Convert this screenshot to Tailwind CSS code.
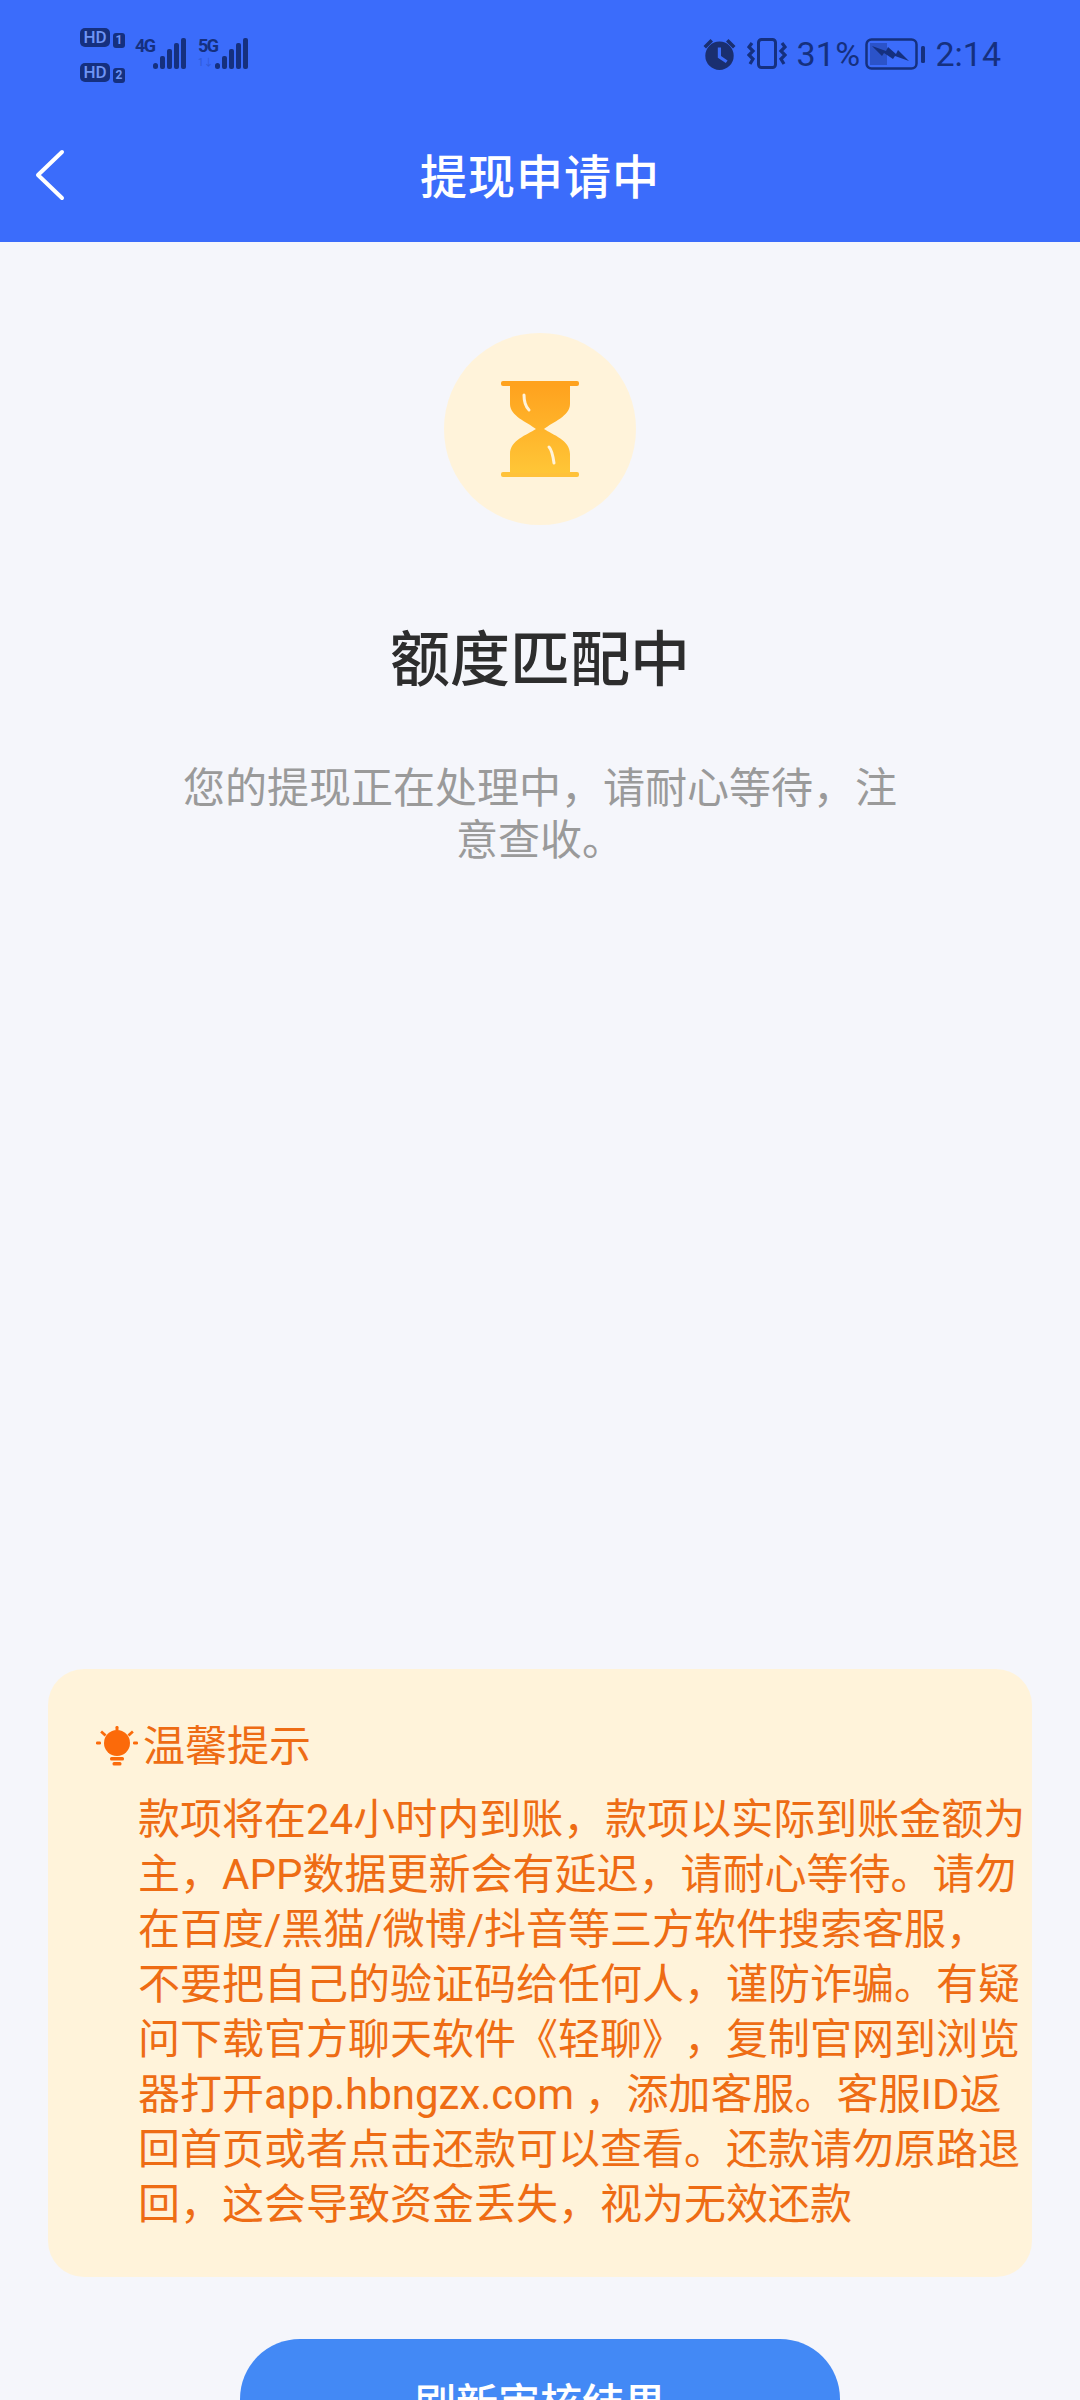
<!DOCTYPE html>
<html>
<head>
  <title>提现申请中</title>
  <script src="https://cdn.jsdelivr.net/npm/@tailwindcss/browser@4"></script>
  <meta name="viewport" content="width=device-width, initial-scale=1.0">
</head>

<body class="bg-[#f5f6fb] font-['Roboto','Noto_Sans_CJK_SC',sans-serif] [text-spacing-trim:space-all]">
  <div class="w-[1080px] h-[2400px] overflow-hidden flex flex-col">

    <!-- Header -->
    <div class="h-[242px] shrink-0 bg-[#3b6cfb] flex flex-col">
      <!-- Status bar -->
      <div class="h-[110px] flex justify-between pl-[80px] pr-[79px] text-[#15307f]">
        <div class="flex pt-[28px]">
          <div class="flex flex-col gap-[15px]">
            <div class="flex gap-[3px]">
              <span class="w-[30px] h-[19px] rounded-[5px] bg-[#15307f] text-[#6f95f5] text-[17px] leading-[19px] font-medium text-center">HD</span>
              <span class="w-[12px] h-[15px] mt-[5px] rounded-[3px] bg-[#15307f] text-[#6f95f5] text-[12px] leading-[15px] font-bold text-center">1</span>
            </div>
            <div class="flex gap-[3px]">
              <span class="w-[30px] h-[19px] rounded-[5px] bg-[#15307f] text-[#6f95f5] text-[17px] leading-[19px] font-medium text-center">HD</span>
              <span class="w-[12px] h-[15px] mt-[5px] rounded-[3px] bg-[#15307f] text-[#6f95f5] text-[12px] leading-[15px] font-bold text-center">2</span>
            </div>
          </div>
          <span class="ml-[10px] mt-[9px] w-[18px] text-[18px] leading-[17px] font-bold tracking-[-1.5px]">4G</span>
          <svg class="mt-[10px]" width="34" height="32" viewBox="0 0 34 32" fill="#15307f">
            <rect x="0" y="25" width="5" height="6" rx="2.5"/>
            <rect x="7" y="18" width="5" height="13" rx="2"/>
            <rect x="14" y="11" width="5" height="20" rx="2"/>
            <rect x="21" y="5" width="5" height="26" rx="2"/>
            <rect x="28" y="0" width="5" height="31" rx="2"/>
          </svg>
          <div class="ml-[11px] mt-[9px] w-[17px] flex flex-col">
            <span class="text-[18px] leading-[17px] font-bold tracking-[-1.5px]">5G</span>
            <span class="mt-[3px] text-[10px] leading-[12px] opacity-30">1↓</span>
          </div>
          <svg class="mt-[10px]" width="34" height="32" viewBox="0 0 34 32" fill="#15307f">
            <rect x="0" y="25" width="5" height="6" rx="2.5"/>
            <rect x="7" y="18" width="5" height="13" rx="2"/>
            <rect x="14" y="11" width="5" height="20" rx="2"/>
            <rect x="21" y="5" width="5" height="26" rx="2"/>
            <rect x="28" y="0" width="5" height="31" rx="2"/>
          </svg>
        </div>

        <div class="flex items-start pt-[38px]">
          <!-- Alarm -->
          <svg width="33" height="32" viewBox="0 0 33 32" fill="#1a2f70">
            <path d="M0.5 8 L7.5 1 L10 3.5 L3 10.5 Z M32.5 8 L25.5 1 L23 3.5 L30 10.5 Z"/>
            <path fill-rule="evenodd" d="M16.5 3.5a14.2 14.2 0 1 1 0 28.4a14.2 14.2 0 0 1 0-28.4Z M14.8 9.5v10.2l8 5.4 1.8-2.6-6.6-4.4V9.5Z"/>
          </svg>
          <!-- Vibrate -->
          <svg class="ml-[11px]" width="40" height="32" viewBox="0 0 40 32" fill="none" stroke="#15307f">
            <rect x="11.5" y="1.5" width="17" height="28" rx="3" stroke-width="3"/>
            <path d="M5 5 L2 9 L6 13 L2 17 L6 21 L3 26" stroke-width="3.2"/>
            <path d="M35 5 L38 9 L34 13 L38 17 L34 21 L37 26" stroke-width="3.2"/>
          </svg>
          <span class="ml-[9px] text-[34px] leading-[32px] w-[61px] tracking-[0.3px]">31%</span>
          <!-- Battery -->
          <svg class="ml-[8px]" width="60" height="32" viewBox="0 0 60 32" fill="none">
            <rect x="1.5" y="1.5" width="50" height="29" rx="5" stroke="#15307f" stroke-width="2.5"/>
            <rect x="5" y="5" width="17" height="22" fill="#15307f" fill-opacity="0.4"/>
            <rect x="56" y="8" width="4" height="17" rx="1.5" fill="#15307f"/>
            <path d="M7 8 L21 13 L23 9 L31 16 L33 12 L44 23 L30 18 L28 21 L19 15 L17 18 Z" fill="#15307f"/>
          </svg>
          <span class="ml-[10px] text-[34px] leading-[32px]">2:14</span>
        </div>
      </div>

      <!-- Nav -->
      <div class="relative h-[132px]">
        <svg class="absolute left-[34px] top-[39px]" width="32" height="52" viewBox="0 0 32 52" fill="none" stroke="#ffffff" stroke-width="4" stroke-linecap="round" stroke-linejoin="round">
          <path d="M28 3 L4 26 L28 49"/>
        </svg>
        <h1 class="text-center text-white text-[47px] leading-[136px] font-medium tracking-[1px]">提现申请中</h1>
      </div>
    </div>

    <!-- Status -->
    <div class="flex flex-col items-center">
      <div class="mt-[91px] w-[192px] h-[192px] rounded-full bg-[#fff3da] flex items-center justify-center">
        <svg width="78" height="98" viewBox="0 0 78 98">
          <defs>
            <linearGradient id="sand" x1="0" y1="0" x2="0" y2="1">
              <stop offset="0" stop-color="#ffa21e"/>
              <stop offset="1" stop-color="#ffc637"/>
            </linearGradient>
          </defs>
          <rect x="0" y="1" width="78" height="5" rx="2" fill="#ffa21e"/>
          <rect x="0" y="92" width="78" height="5" rx="2" fill="#ffc23a"/>
          <path d="M9 5H69V24C69 36 52 42 43 49C52 55 69 60 69 74V93H9V74C9 60 26 55 35 49C26 42 9 36 9 24Z" fill="url(#sand)"/>
          <path d="M23 15C23 21 24 26 28 30" fill="none" stroke="#fff3da" stroke-width="3" stroke-linecap="round"/>
          <path d="M48 67C51 70 52 76 53 83" fill="none" stroke="#fff3da" stroke-width="3" stroke-linecap="round"/>
        </svg>
      </div>
      <h2 class="mt-[96px] text-[60px] leading-[80px] font-medium text-[#2d2d2d]">额度匹配中</h2>
      <p class="mt-[62px] px-[170px] text-center text-[42px] leading-[52px] text-[#9a9a9a]">您的提现正在处理中，请耐心等待，注<br>意查收。</p>
    </div>

    <!-- Tips card -->
    <div class="mt-[802px] mx-[48px] shrink-0 h-[608px] rounded-[36px] bg-[#fff3da] pt-[48px] text-[#ee6c14]">
      <div class="flex items-center h-[60px] pl-[48px]">
        <svg width="42" height="42" viewBox="0 0 42 42" fill="#fb6a0a">
          <circle cx="21" cy="17" r="13"/>
          <rect x="14" y="31" width="14" height="3.4" rx="1.5"/>
          <rect x="16.5" y="36" width="9" height="3.4" rx="1.5"/>
          <rect x="19.5" y="0" width="3" height="5" rx="1.2"/>
          <rect x="0" y="15.5" width="5" height="3" rx="1.2"/>
          <rect x="37" y="15.5" width="5" height="3" rx="1.2"/>
          <path d="M6 4.5 L10.5 8.5 L8.6 10.5 L4.2 6.5 Z M36 4.5 L31.5 8.5 L33.4 10.5 L37.8 6.5 Z"/>
        </svg>
        <span class="ml-[5px] text-[42px] leading-[60px]">温馨提示</span>
      </div>
      <p class="mt-[15px] pl-[90px] text-[42px] leading-[55px] whitespace-nowrap">款项将在24小时内到账，款项以实际到账金额为<br>主，APP数据更新会有延迟，请耐心等待。请勿<br>在百度/黑猫/微博/抖音等三方软件搜索客服，<br>不要把自己的验证码给任何人，谨防诈骗。有疑<br>问下载官方聊天软件《轻聊》，复制官网到浏览<br>器打开app.hbngzx.com ，添加客服。客服ID返<br>回首页或者点击还款可以查看。还款请勿原路退<br>回，这会导致资金丢失，视为无效还款</p>
    </div>

    <!-- Refresh button -->
    <div class="mt-[62px] shrink-0 flex justify-center">
      <button class="w-[600px] h-[130px] shrink-0 rounded-[60px] bg-[#4389f5] text-white text-[42px] font-medium">刷新审核结果</button>
    </div>
  </div>
</body>
</html>
